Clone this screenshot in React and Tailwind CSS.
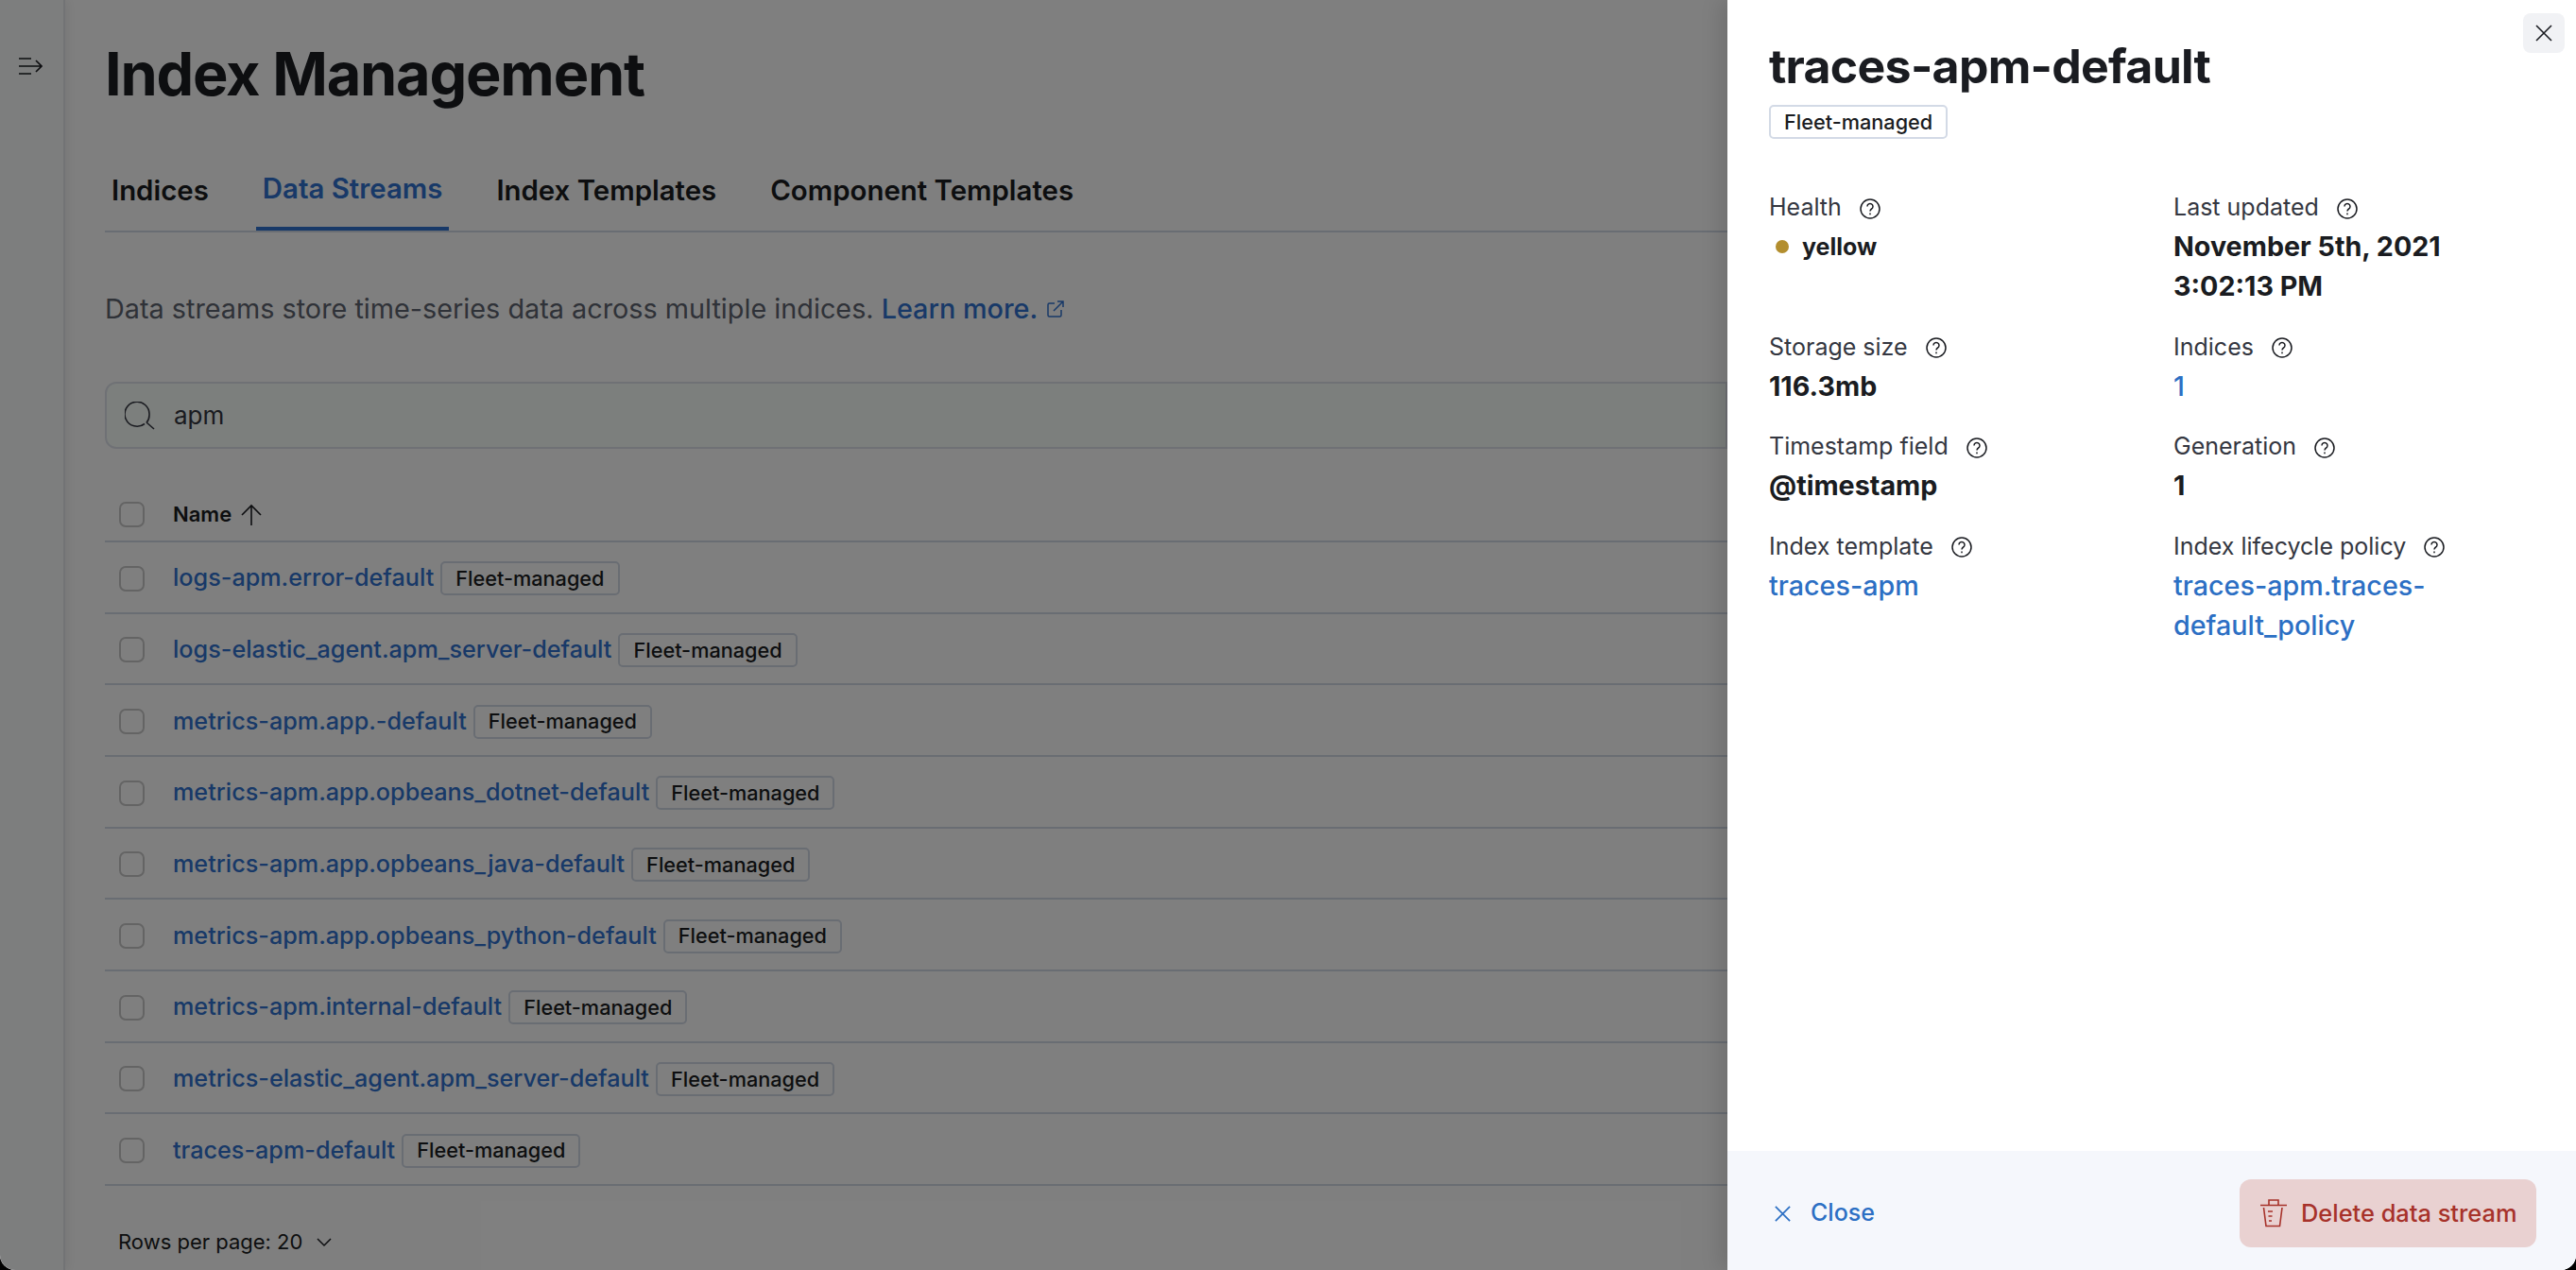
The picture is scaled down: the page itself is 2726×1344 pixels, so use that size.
import React from "react";

const streams = [
  "logs-apm.error-default",
  "logs-elastic_agent.apm_server-default",
  "metrics-apm.app.-default",
  "metrics-apm.app.opbeans_dotnet-default",
  "metrics-apm.app.opbeans_java-default",
  "metrics-apm.app.opbeans_python-default",
  "metrics-apm.internal-default",
  "metrics-elastic_agent.apm_server-default",
  "traces-apm-default",
];

const tabs = ["Indices", "Data Streams", "Index Templates", "Component Templates"];

const Checkbox = () => (
  <span className="block w-[27px] h-[27px] rounded-[7px] border-2 border-[#c8c8c8] bg-white" />
);

const FleetTag = ({ light }) => (
  <span
    className={`inline-flex items-center h-[36px] px-[14px] rounded-[5px] border-2 text-[21.7px] font-medium whitespace-nowrap border-[#d3dae6] text-[#1a1c21] ${
      light ? "bg-white" : ""
    }`}
  >
    Fleet-managed
  </span>
);

const HelpIcon = () => (
  <svg className="mt-[3px]" width="22" height="22" viewBox="0 0 22 22" fill="none" stroke="#1a1c21" strokeWidth="1.5">
    <circle cx="11" cy="11" r="10" />
    <path d="M8 8.5a3 3 0 1 1 4.6 2.5c-1.1.7-1.6 1.3-1.6 2.6" />
    <path d="M11 15.6v1.6" />
  </svg>
);

const Field = ({ label, children }) => (
  <div>
    <div className="flex items-center gap-[19px] text-[25px] leading-[42px] text-[#343741]">
      {label}
      <HelpIcon />
    </div>
    {children}
  </div>
);

const Strong = ({ children }) => (
  <div className="text-[28.7px] leading-[42px] font-bold text-[#1a1c21]">{children}</div>
);

const BlueLink = ({ children }) => (
  <div className="text-[28.7px] leading-[42px] font-medium text-[#2c6fc4]">{children}</div>
);

export default function App() {
  return (
    <div className="bg-black h-[1344px] w-[2726px]">
      <div className="flex h-full rounded-b-[16px] overflow-hidden bg-white font-[Inter,sans-serif]">
        <div className="relative flex flex-1 min-w-0">
          {/* collapsed side nav */}
          <div className="w-[69px] shrink-0 bg-[#fbfcfd] border-r-2 border-[#e4e6ea] shadow-[4px_0_10px_rgba(0,0,0,0.06)] pt-[61px] pl-[20px]">
            <svg width="25" height="18" viewBox="0 0 25 18" fill="none" stroke="#1a1c21" strokeWidth="1.6">
              <path d="M0 1h13M0 9h24M0 17h13M18 3l6 6-6 6" />
            </svg>
          </div>

          <div className="flex-1 min-w-0 pl-[42px] pt-[44px]">
            <h1 className="text-[63px] leading-[68px] font-bold text-[#1a1c21] tracking-[-1.2px]">
              Index Management
            </h1>

            {/* tabs */}
            <div className="flex gap-[43px] mt-[48px] h-[86px] border-b-2 border-[#d3dae6]">
              {tabs.map((t, i) => (
                <div
                  key={t}
                  className={`h-[84px] flex items-center px-[7px] text-[29.4px] font-semibold ${
                    i === 1 ? "text-[#3072d0] border-b-4 border-[#3072d0]" : "text-[#1a1c21]"
                  }`}
                >
                  {t}
                </div>
              ))}
            </div>

            <div className="flex items-center mt-[61px] h-[40px] text-[28.8px] text-[#5f6570]">
              Data streams store time-series data across multiple indices.
              <span className="ml-[8px] font-medium text-[#3072d0]">Learn more.</span>
              <svg className="ml-[10px]" width="18" height="18" viewBox="0 0 18 18" fill="none" stroke="#3072d0" strokeWidth="1.5">
                <path d="M8 3H2.5a1.5 1.5 0 0 0-1.5 1.5v11A1.5 1.5 0 0 0 2.5 17h11a1.5 1.5 0 0 0 1.5-1.5V10M7 11l10-10M11 1h6v6" />
              </svg>
            </div>

            {/* search */}
            <div className="flex items-center mt-[57px] h-[71px] rounded-l-[12px] border-2 border-[#dfe3ea] bg-[#f9fefb] pl-[19px]">
              <svg width="32" height="30" viewBox="0 0 32 30" fill="none" stroke="#343741" strokeWidth="1.6">
                <path d="M21 23.5A13 13 0 1 1 26 14a13 13 0 0 1-3 8.5M23 22l8 7" />
              </svg>
              <span className="ml-[20px] text-[26px] text-[#343741]">apm</span>
            </div>

            {/* table */}
            <div className="flex items-center mt-[40px] h-[59px] border-b-2 border-[#d3dae6] pl-[15px] pt-[2px]">
              <Checkbox />
              <span className="ml-[30px] text-[22px] font-semibold text-[#1a1c21]">Name</span>
              <svg className="ml-[10px]" width="22" height="24" viewBox="0 0 22 24" fill="none" stroke="#1a1c21" strokeWidth="1.6">
                <path d="M11 23V2M1 12L11 2l10 10" />
              </svg>
            </div>
            {streams.map((name) => (
              <div key={name} className="flex items-center h-[75.67px] border-b-2 border-[#d3dae6] pl-[15px] pt-[3px]">
                <Checkbox />
                <span className="ml-[30px] text-[25.2px] font-medium text-[#3072d0]">{name}</span>
                <span className="ml-[7px]">
                  <FleetTag />
                </span>
              </div>
            ))}

            <div className="flex items-center mt-[40px] h-[40px] pl-[14px] text-[22px] text-[#1a1c21]">
              Rows per page: 20
              <svg className="ml-[15px]" width="16" height="10" viewBox="0 0 16 10" fill="none" stroke="#1a1c21" strokeWidth="1.5">
                <path d="M1 1l7 7 7-7" />
              </svg>
            </div>
          </div>

          {/* modal overlay */}
          <div className="absolute inset-0 bg-black/50" />
        </div>

        {/* flyout */}
        <div className="relative w-[898px] shrink-0 flex flex-col bg-white shadow-[-8px_0_20px_rgba(0,0,0,0.12)]">
          <button className="absolute top-[14px] right-[12px] w-[44px] h-[42px] rounded-[8px] bg-[#f1f2f5] flex items-center justify-center">
            <svg width="20" height="20" viewBox="0 0 20 20" fill="none" stroke="#1a1c21" strokeWidth="1.6">
              <path d="M2 2l16 16M18 2L2 18" />
            </svg>
          </button>

          <div className="flex-1 pl-[44px] pt-[34px]">
            <h2 className="text-[50px] leading-[72px] font-bold text-[#1a1c21] tracking-[-0.72px]">traces-apm-default</h2>
            <div className="mt-[5px]">
              <FleetTag light />
            </div>

            <div className="grid grid-cols-[428px_1fr] gap-y-[21.5px] mt-[51px]">
              <Field label="Health">
                <div className="flex items-center text-[25px] leading-[42px] font-bold text-[#1a1c21]">
                  <span className="w-[14px] h-[14px] rounded-full bg-[#b38e2e] ml-[7px] mr-[14px]" />
                  yellow
                </div>
              </Field>
              <Field label="Last updated">
                <Strong>
                  November 5th, 2021
                  <br />
                  3:02:13 PM
                </Strong>
              </Field>
              <Field label="Storage size">
                <Strong>116.3mb</Strong>
              </Field>
              <Field label="Indices">
                <BlueLink>1</BlueLink>
              </Field>
              <Field label="Timestamp field">
                <Strong>@timestamp</Strong>
              </Field>
              <Field label="Generation">
                <Strong>1</Strong>
              </Field>
              <Field label="Index template">
                <BlueLink>traces-apm</BlueLink>
              </Field>
              <Field label="Index lifecycle policy">
                <BlueLink>
                  traces-apm.traces-
                  <br />
                  default_policy
                </BlueLink>
              </Field>
            </div>
          </div>

          {/* flyout footer */}
          <div className="h-[126px] pt-[6px] bg-[#f5f7fc] flex items-center justify-between pl-[49px] pr-[42px]">
            <div className="flex items-center gap-[20px] text-[25px] font-medium text-[#2c6fc4]">
              <svg width="19" height="19" viewBox="0 0 20 20" fill="none" stroke="#2c6fc4" strokeWidth="1.8">
                <path d="M2 2l16 16M18 2L2 18" />
              </svg>
              Close
            </div>
            <div className="flex items-center gap-[15px] w-[314px] h-[72px] rounded-[12px] bg-[#e9d1d1] pl-[22px] text-[25.4px] font-medium text-[#a7322a]">
              <svg width="28" height="30" viewBox="0 0 28 30" fill="none" stroke="#a7322a" strokeWidth="1.6">
                <path d="M0 6.5h28M9 6V1h10v5M3.5 9l2.5 19.5h14.5L23 9M8 13h5M8.5 18h4M9 23h3" />
              </svg>
              Delete data stream
            </div>
          </div>
        </div>
      </div>
    </div>
  );
}
